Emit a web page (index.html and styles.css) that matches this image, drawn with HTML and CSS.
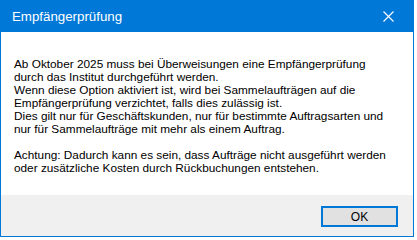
FILE: index.html
```html
<!DOCTYPE html>
<html lang="de">
<head>
  <meta charset="UTF-8">
  <title>Empfängerprüfung</title>
  <link rel="stylesheet" href="styles.css">
</head>
<body>
  <div class="dialog">
    <div class="titlebar">
      <span class="title">Empfängerprüfung</span>
      <span class="close">
        <svg width="11" height="11" viewBox="0 0 11 11"><path d="M0.5 0.5 L10.5 10.5 M10.5 0.5 L0.5 10.5" stroke="#fff" stroke-width="1.1" fill="none"/></svg>
      </span>
    </div>
    <div class="content">
      <p>Ab Oktober 2025 muss bei Überweisungen eine Empfängerprüfung<br>
      durch das Institut durchgeführt werden.<br>
      Wenn diese Option aktiviert ist, wird bei Sammelaufträgen auf die<br>
      Empfängerprüfung verzichtet, falls dies zulässig ist.<br>
      Dies gilt nur für Geschäftskunden, nur für bestimmte Auftragsarten und<br>
      nur für Sammelaufträge mit mehr als einem Auftrag.</p>
      <p>Achtung: Dadurch kann es sein, dass Aufträge nicht ausgeführt werden<br>
      oder zusätzliche Kosten durch Rückbuchungen entstehen.</p>
    </div>
    <div class="footer">
      <button class="ok">OK</button>
    </div>
  </div>
</body>
</html>
```

FILE: styles.css
```css
body {
  margin: 0;
  background: #ffffff;
  font-family: 'Liberation Sans', Arial, sans-serif;
}
.dialog {
  width: 412px;
  height: 235px;
  border: 1px solid #0078d7;
  display: flex;
  flex-direction: column;
}
.titlebar {
  height: 31px;
  background: #0078d7;
  display: flex;
  align-items: center;
  justify-content: space-between;
  padding-left: 11px;
}
.title {
  color: #ffffff;
  font-size: 13.3px;
}
.close {
  width: 46px;
  display: flex;
  justify-content: center;
  padding-right: 2px;
}
.close svg { display: block; }
.content {
  flex: 1;
  background: #ffffff;
  padding: 26px 0 0 13px;
  font-size: 11.8px;
  line-height: 13px;
  color: #000000;
  white-space: nowrap;
}
.content p { margin: 0 0 13px 0; }
.footer {
  height: 41px;
  background: #f0f0f0;
  display: flex;
  justify-content: flex-end;
  align-items: flex-start;
  padding: 11px 15px 0 0;
  box-sizing: border-box;
}
.ok {
  width: 77px;
  height: 21px;
  background: #e1e1e1;
  border: 2px solid #0078d7;
  font-family: inherit;
  font-size: 12px;
  color: #000000;
  padding: 0;
}
```
